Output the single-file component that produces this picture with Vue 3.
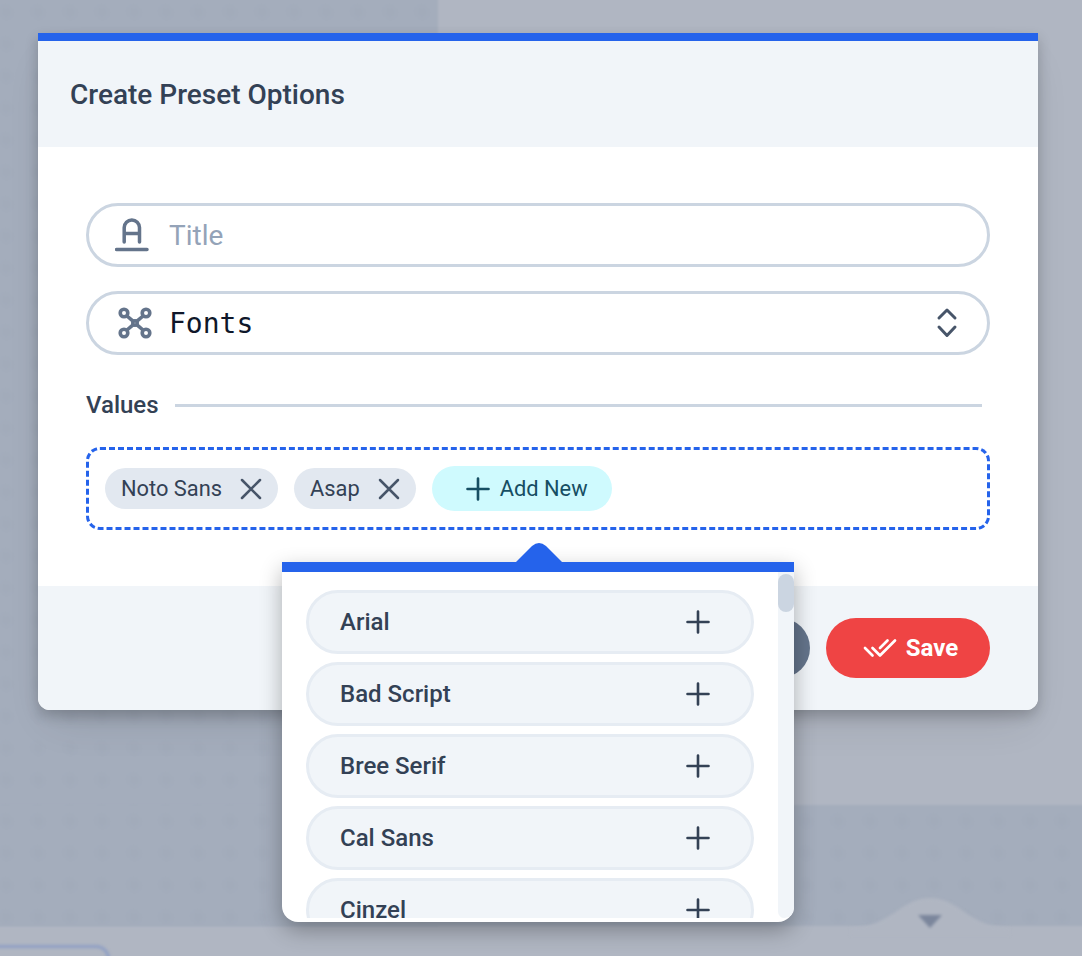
<script setup>
const chips = ["Noto Sans", "Asap"];
const fonts = ["Arial", "Bad Script", "Bree Serif", "Cal Sans", "Cinzel"];
</script>

<template>
  <div class="page">
    <div class="bg-side"></div>
    <div class="bg-band"></div>
    <svg class="bg-bump" width="160" height="56" viewBox="0 0 160 56">
      <path d="M0 48C40 48 50 18 80 18C110 18 120 48 160 48V56H0Z" fill="#b0b6c2" />
      <path d="M68 35H92L80 48Z" fill="#7b869c" />
    </svg>
    <div class="bg-tab"></div>

    <div class="modal">
      <header class="modal-head">
        <h2>Create Preset Options</h2>
      </header>

      <div class="modal-body">
        <label class="field">
          <svg class="icon" viewBox="0 0 36 36" fill="none" stroke="#64748b" stroke-width="3.5" stroke-linecap="round" stroke-linejoin="round">
            <path d="M9.2 25V10.6a7.6 7.6 0 0 1 15.3 0V25M9.2 16.5H24.5M1.5 32.5H32" />
          </svg>
          <input type="text" placeholder="Title" />
        </label>

        <div class="field field-select">
          <svg class="icon" viewBox="0 0 36 36" fill="none" stroke="#64748b" stroke-width="3.6">
            <circle cx="7" cy="8" r="3.8" />
            <circle cx="29" cy="8" r="3.8" />
            <circle cx="7" cy="28" r="3.8" />
            <circle cx="29" cy="28" r="3.8" />
            <circle cx="18" cy="18" r="2.2" />
            <path d="M10 11L16 16.2M26 11L20 16.2M10 25L16 19.8M26 25L20 19.8" />
          </svg>
          <span class="select-value">Fonts</span>
          <svg class="chevrons" width="24" height="36" viewBox="0 0 24 36" fill="none" stroke="#475569" stroke-width="3" stroke-linecap="round" stroke-linejoin="round">
            <path d="M4 13L12 5L20 13M4 22L12 30.5L20 22" />
          </svg>
        </div>

        <div class="values-title">
          <span>Values</span>
          <div class="values-line"></div>
        </div>

        <div class="values-wrap">
          <div class="values-box">
            <span v-for="chip in chips" :key="chip" class="chip">
              {{ chip }}
              <svg class="icon" viewBox="0 0 24 24" fill="none" stroke="#475569" stroke-width="1.7" stroke-linecap="round">
                <path d="M18 6L6 18M6 6L18 18" />
              </svg>
            </span>
            <button class="add-btn">
              <svg class="icon" viewBox="0 0 24 24" fill="none" stroke="#164e63" stroke-width="1.75" stroke-linecap="round">
                <path d="M12 5V19M5 12H19" />
              </svg>
              Add New
            </button>
          </div>

          <div class="dropdown">
            <svg class="arrow" width="48" height="21" viewBox="0 0 48 21">
              <path d="M0 21L17 4Q24 -2 31 4L48 21Z" fill="#2563eb" />
            </svg>
            <div class="font-list">
              <div v-for="font in fonts" :key="font" class="font-item">
                <span>{{ font }}</span>
                <svg class="icon" viewBox="0 0 24 24" fill="none" stroke="#334155" stroke-width="1.75" stroke-linecap="round">
                  <path d="M12 5V19M5 12H19" />
                </svg>
              </div>
            </div>
            <div class="scroll-track">
              <div class="scroll-thumb"></div>
            </div>
          </div>
        </div>
      </div>

      <footer class="modal-foot">
        <button class="btn btn-cancel">Cancel</button>
        <button class="btn btn-save">
          <svg class="icon" viewBox="0 0 24 24" fill="none" stroke="#fff" stroke-width="1.8" stroke-linecap="round" stroke-linejoin="round">
            <path d="M7 12L12 17L22 7M2 12L7 17M12 12L17 7" />
          </svg>
          Save
        </button>
      </footer>
    </div>
  </div>
</template>

<style>
body {
  background: #b0b6c2;
}
</style>

<style scoped>
* {
  box-sizing: border-box;
  font-family: Roboto, sans-serif;
}

.page {
  position: relative;
  width: 1082px;
  height: 956px;
  overflow: hidden;
  background: #b0b6c2;
  padding: 33px 0 0 38px;
}

.bg-side,
.bg-band {
  position: absolute;
  background-color: #a4adbc;
  background-image: radial-gradient(circle, rgba(120, 130, 150, 0.06) 0, rgba(120, 130, 150, 0) 10px);
  background-size: 32px 32px;
  background-position: -6px 0;
  filter: blur(1px);
}

.bg-side {
  left: -4px;
  top: -4px;
  width: 442px;
  height: 930px;
}

.bg-band {
  left: -4px;
  top: 805px;
  width: 1090px;
  height: 121px;
}

.bg-bump {
  position: absolute;
  left: 850px;
  top: 880px;
  filter: blur(1.5px);
}

.bg-tab {
  position: absolute;
  left: -20px;
  top: 945px;
  width: 130px;
  height: 40px;
  border: 3px solid #8f9fc4;
  border-radius: 14px;
  filter: blur(1.5px);
}

.modal {
  position: relative;
  width: 1000px;
  height: 677px;
  border-top: 8px solid #2563eb;
  border-radius: 0 0 12px 12px;
  background: #fff;
  box-shadow: 0 6px 14px rgba(0, 0, 0, 0.2), 0 20px 40px -12px rgba(0, 0, 0, 0.12);
  display: flex;
  flex-direction: column;
}

.modal-head {
  height: 106px;
  background: #f1f5f9;
  padding: 0 32px;
  display: flex;
  align-items: center;
}

.modal-head h2 {
  margin: 0;
  font-size: 28px;
  font-weight: 465;
  color: #334155;
}

.modal-body {
  height: 439px;
  padding: 56px 48px 0;
  display: flex;
  flex-direction: column;
}

.field {
  height: 64px;
  flex: none;
  border: 3px solid #cbd5e1;
  border-radius: 32px;
  padding: 0 26px;
  margin-bottom: 24px;
  display: flex;
  align-items: center;
  gap: 18px;
}

.field-select {
  padding-left: 28px;
  gap: 16px;
}

.icon {
  width: 36px;
  height: 36px;
  flex: none;
}

.field input {
  border: none;
  outline: none;
  flex: 1;
  min-width: 0;
  font-size: 28px;
  color: #0f172a;
  padding: 0;
  background: transparent;
}

.field input::placeholder {
  color: #94a3b8;
}

.select-value {
  flex: 1;
  font-family: "DejaVu Sans Mono", monospace;
  font-size: 28px;
  color: #0f172a;
}

.chevrons {
  flex: none;
  margin-right: 2px;
}

.values-title {
  display: flex;
  align-items: center;
  gap: 16px;
  padding-right: 8px;
  height: 28px;
  margin-top: 12px;
  font-size: 24px;
  font-weight: 465;
  color: #334155;
}

.values-line {
  flex: 1;
  height: 3px;
  background: #cbd5e1;
}

.values-wrap {
  position: relative;
  margin-top: 28px;
}

.values-box {
  height: 83px;
  border: 3px dashed #2563eb;
  border-radius: 14px;
  padding: 0 16px;
  display: flex;
  align-items: center;
  gap: 16px;
}

.chip {
  height: 41px;
  border-radius: 21px;
  background: #e2e8f0;
  padding: 0 9px 0 16px;
  display: flex;
  align-items: center;
  gap: 11px;
  font-size: 21.85px;
  font-weight: 450;
  color: #334155;
}

.add-btn {
  height: 45px;
  border: none;
  border-radius: 23px;
  background: #cffafe;
  padding: 0 24px 0 28px;
  display: flex;
  align-items: center;
  gap: 4px;
  font-size: 21.85px;
  font-weight: 450;
  color: #164e63;
}

.dropdown {
  position: absolute;
  left: 196px;
  top: 115px;
  width: 512px;
  height: 360px;
  border-top: 10px solid #2563eb;
  border-radius: 0 0 16px 16px;
  background: #fff;
  box-shadow: 0 8px 22px rgba(0, 0, 0, 0.3);
  z-index: 5;
}

.arrow {
  position: absolute;
  left: 233px;
  top: -30px;
}

.font-list {
  height: 328px;
  margin-top: 18px;
  padding: 0 40px 0 24px;
  overflow: hidden;
  display: flex;
  flex-direction: column;
  gap: 8px;
}

.font-item {
  height: 64px;
  flex: none;
  border: 3px solid #e6ecf3;
  border-radius: 32px;
  background: #f1f5f9;
  padding: 0 35px 0 31px;
  display: flex;
  align-items: center;
  justify-content: space-between;
  font-size: 24px;
  font-weight: 465;
  color: #334155;
}

.scroll-track {
  position: absolute;
  top: 0;
  right: 0;
  width: 16px;
  height: 346px;
  border-radius: 0 0 12px 8px;
  background: #f1f5f9;
}

.scroll-thumb {
  margin-top: 2px;
  height: 38px;
  border-radius: 8px;
  background: #cbd5e1;
}

.modal-foot {
  flex: 1;
  background: #f1f5f9;
  border-radius: 0 0 12px 12px;
  padding: 0 48px;
  display: flex;
  align-items: center;
  justify-content: flex-end;
  gap: 16px;
}

.btn {
  height: 60px;
  border: none;
  border-radius: 30px;
  display: flex;
  align-items: center;
  justify-content: center;
  font-size: 24px;
  font-weight: 700;
  color: #fff;
}

.btn-cancel {
  width: 180px;
  background: #64748b;
}

.btn-save {
  width: 164px;
  padding-left: 10px;
  background: #ef4444;
  gap: 8px;
}
</style>
